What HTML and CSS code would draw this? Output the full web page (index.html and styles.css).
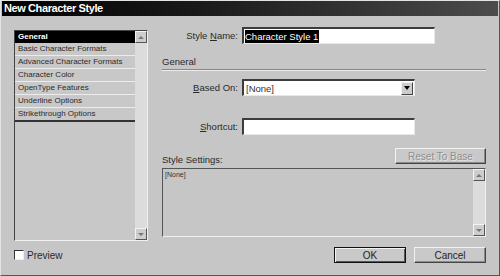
FILE: index.html
```html
<!DOCTYPE html>
<html lang="en">
<head>
    <meta charset="utf-8">
    <title>New Character Style</title>
    <link rel="stylesheet" href="styles.css">
</head>
<body>
    <div class="dialog">
        <div class="titlebar">New Character Style</div>

        <div class="dialog-body">
            <div class="main">
                <!-- category list -->
                <div class="cat-list">
                    <div class="cat-items">
                        <div class="cat-item selected">General</div>
                        <div class="cat-item">Basic Character Formats</div>
                        <div class="cat-item">Advanced Character Formats</div>
                        <div class="cat-item">Character Color</div>
                        <div class="cat-item">OpenType Features</div>
                        <div class="cat-item">Underline Options</div>
                        <div class="cat-item last">Strikethrough Options</div>
                    </div>
                    <div class="scrollbar">
                        <div class="scroll-btn"><span class="arrow up"></span></div>
                        <div class="scroll-track"></div>
                        <div class="scroll-btn"><span class="arrow down"></span></div>
                    </div>
                </div>

                <!-- settings panel -->
                <div class="panel">
                    <div class="field-row">
                        <label class="field-label">Style <u>N</u>ame:</label>
                        <div class="text-input name-input"><span class="sel-text">Character Style 1</span></div>
                    </div>

                    <div class="section-head">General</div>

                    <div class="field-row based-row">
                        <label class="field-label"><u>B</u>ased On:</label>
                        <div class="text-input select-input">
                            <span class="select-value">[None]</span>
                            <div class="drop-btn"><span class="arrow down dark"></span></div>
                        </div>
                    </div>

                    <div class="field-row shortcut-row">
                        <label class="field-label"><u>S</u>hortcut:</label>
                        <div class="text-input short-input"></div>
                    </div>

                    <div class="settings-head">
                        <span class="settings-label">Style Settings:</span>
                        <button class="btn reset-btn" disabled>Reset To Base</button>
                    </div>

                    <div class="settings-box">
                        <div class="settings-text">[None]</div>
                        <div class="scrollbar">
                            <div class="scroll-btn"><span class="arrow up"></span></div>
                            <div class="scroll-track"></div>
                            <div class="scroll-btn"><span class="arrow down"></span></div>
                        </div>
                    </div>
                </div>
            </div>

            <div class="footer">
                <label class="preview"><span class="checkbox"></span>Preview</label>
                <div class="buttons">
                    <button class="btn default-btn">OK</button>
                    <button class="btn">Cancel</button>
                </div>
            </div>
        </div>
    </div>
</body>
</html>
```

FILE: styles.css
```css
* {
    box-sizing: border-box;
}

body {
    margin: 0;
    background: #c6c6c6;
    font-family: "Liberation Sans", Arial, sans-serif;
    color: #1e1e1e;
}

.dialog {
    width: 500px;
    height: 276px;
    background: #c6c6c6;
    border-top: 1px solid #e4e4e4;
    border-left: 1px solid #e4e4e4;
    border-right: 1px solid #555;
    border-bottom: 1px solid #555;
    overflow: hidden;
}

.titlebar {
    height: 15px;
    margin: 0 1px;
    padding-left: 2px;
    background: linear-gradient(to right, #000 0%, #1a1a1a 40%, #4c4c4c 100%);
    color: #fff;
    font-weight: bold;
    font-size: 11px;
    line-height: 15px;
    letter-spacing: -0.4px;
}

.dialog-body {
    padding: 11px 13px 0 13px;
}

.main {
    display: flex;
    height: 219px;
}

/* category list */
.cat-list {
    display: flex;
    width: 134px;
    height: 211px;
    margin-top: 3px;
    border-top: 1px solid #444;
    border-left: 1px solid #444;
    border-right: 1px solid #f0f0f0;
    border-bottom: 1px solid #f0f0f0;
    background: #c8c8c8;
}

.cat-items {
    flex: 1;
}

.cat-item {
    height: 13px;
    padding-left: 3px;
    font-size: 8px;
    line-height: 12px;
    border-bottom: 1px solid #ececec;
    color: #2a2a2a;
}

.cat-item.selected {
    height: 12px;
    background: #000;
    color: #fff;
    font-weight: bold;
    border-bottom: none;
}

.cat-item.last {
    height: 14px;
    border-bottom: 2px solid #333;
}

.scrollbar {
    display: flex;
    flex-direction: column;
    width: 12px;
    background: #dcdcdc;
}

.scroll-track {
    flex: 1;
}

.scroll-btn {
    height: 12px;
    background: #cdcdcd;
    border-top: 1px solid #f4f4f4;
    border-left: 1px solid #f4f4f4;
    border-right: 1px solid #555;
    border-bottom: 1px solid #555;
    display: flex;
    align-items: center;
    justify-content: center;
}

.arrow {
    width: 0;
    height: 0;
    border-left: 3px solid transparent;
    border-right: 3px solid transparent;
}

.arrow.up {
    border-bottom: 3px solid #777;
}

.arrow.down {
    border-top: 3px solid #777;
}

.arrow.dark {
    border-top-color: #000;
    border-top-width: 4px;
}

/* right panel */
.panel {
    width: 324px;
    margin-left: 14px;
    font-size: 9.5px;
}

.field-row {
    display: flex;
    align-items: center;
    height: 17px;
}

.field-label {
    width: 80px;
    padding-right: 4px;
    text-align: right;
    color: #2a2a2a;
}

.text-input {
    height: 17px;
    background: #fff;
    border-top: 2px solid #3c3c3c;
    border-left: 2px solid #3c3c3c;
    border-right: 1px solid #e8e8e8;
    border-bottom: 1px solid #e8e8e8;
    display: flex;
    align-items: center;
}

.name-input {
    width: 193px;
    padding-left: 1px;
}

.sel-text {
    background: #000;
    color: #fff;
    line-height: 13px;
    padding-right: 1px;
}

.section-head {
    margin-top: 12px;
    height: 14px;
    line-height: 12px;
    color: #2a2a2a;
    border-bottom: 1px solid #888;
    box-shadow: 0 1px 0 #ececec;
}

.based-row {
    margin-top: 9px;
}

.select-input {
    width: 173px;
    justify-content: space-between;
    padding-left: 2px;
}

.select-value {
    color: #333;
}

.drop-btn {
    width: 12px;
    height: 13px;
    margin-right: 1px;
    background: #cdcdcd;
    border-top: 1px solid #f4f4f4;
    border-left: 1px solid #f4f4f4;
    border-right: 1px solid #444;
    border-bottom: 1px solid #444;
    display: flex;
    align-items: center;
    justify-content: center;
}

.shortcut-row {
    margin-top: 22px;
}

.short-input {
    width: 173px;
}

.settings-head {
    display: flex;
    justify-content: space-between;
    align-items: flex-end;
    margin-top: 13px;
    height: 16px;
}

.settings-label {
    color: #2a2a2a;
    line-height: 12px;
    margin-bottom: -2px;
}

.btn {
    font-family: "Liberation Sans", Arial, sans-serif;
    font-size: 10px;
    color: #1e1e1e;
    background: #c9c9c9;
    border-top: 1px solid #f2f2f2;
    border-left: 1px solid #f2f2f2;
    border-right: 1px solid #444;
    border-bottom: 1px solid #444;
    box-shadow: inset -1px -1px 0 #8a8a8a;
    padding: 0;
    margin: 0;
    height: 16px;
}

.reset-btn {
    width: 91px;
    color: #8e8e8e;
    text-shadow: 1px 1px 0 #e6e6e6;
}

.settings-box {
    display: flex;
    margin-top: 4px;
    height: 69px;
    width: 324px;
    border-top: 1px solid #555;
    border-left: 1px solid #555;
    border-right: 1px solid #f0f0f0;
    border-bottom: 1px solid #f0f0f0;
}

.settings-text {
    flex: 1;
    font-size: 7px;
    padding: 2px 0 0 2px;
    color: #333;
}

/* footer */
.footer {
    display: flex;
    justify-content: space-between;
    align-items: center;
    height: 18px;
}

.preview {
    display: flex;
    align-items: center;
    font-size: 10px;
    color: #2a2a2a;
}

.checkbox {
    width: 10px;
    height: 10px;
    margin-right: 3px;
    background: #fff;
    border-top: 1px solid #333;
    border-left: 1px solid #333;
    border-right: 1px solid #eee;
    border-bottom: 1px solid #eee;
}

.buttons {
    display: flex;
    gap: 8px;
}

.buttons .btn {
    width: 72px;
}

.default-btn {
    border: 1px solid #111;
    box-shadow: inset 1px 1px 0 #f2f2f2, inset -1px -1px 0 #555;
}
```
